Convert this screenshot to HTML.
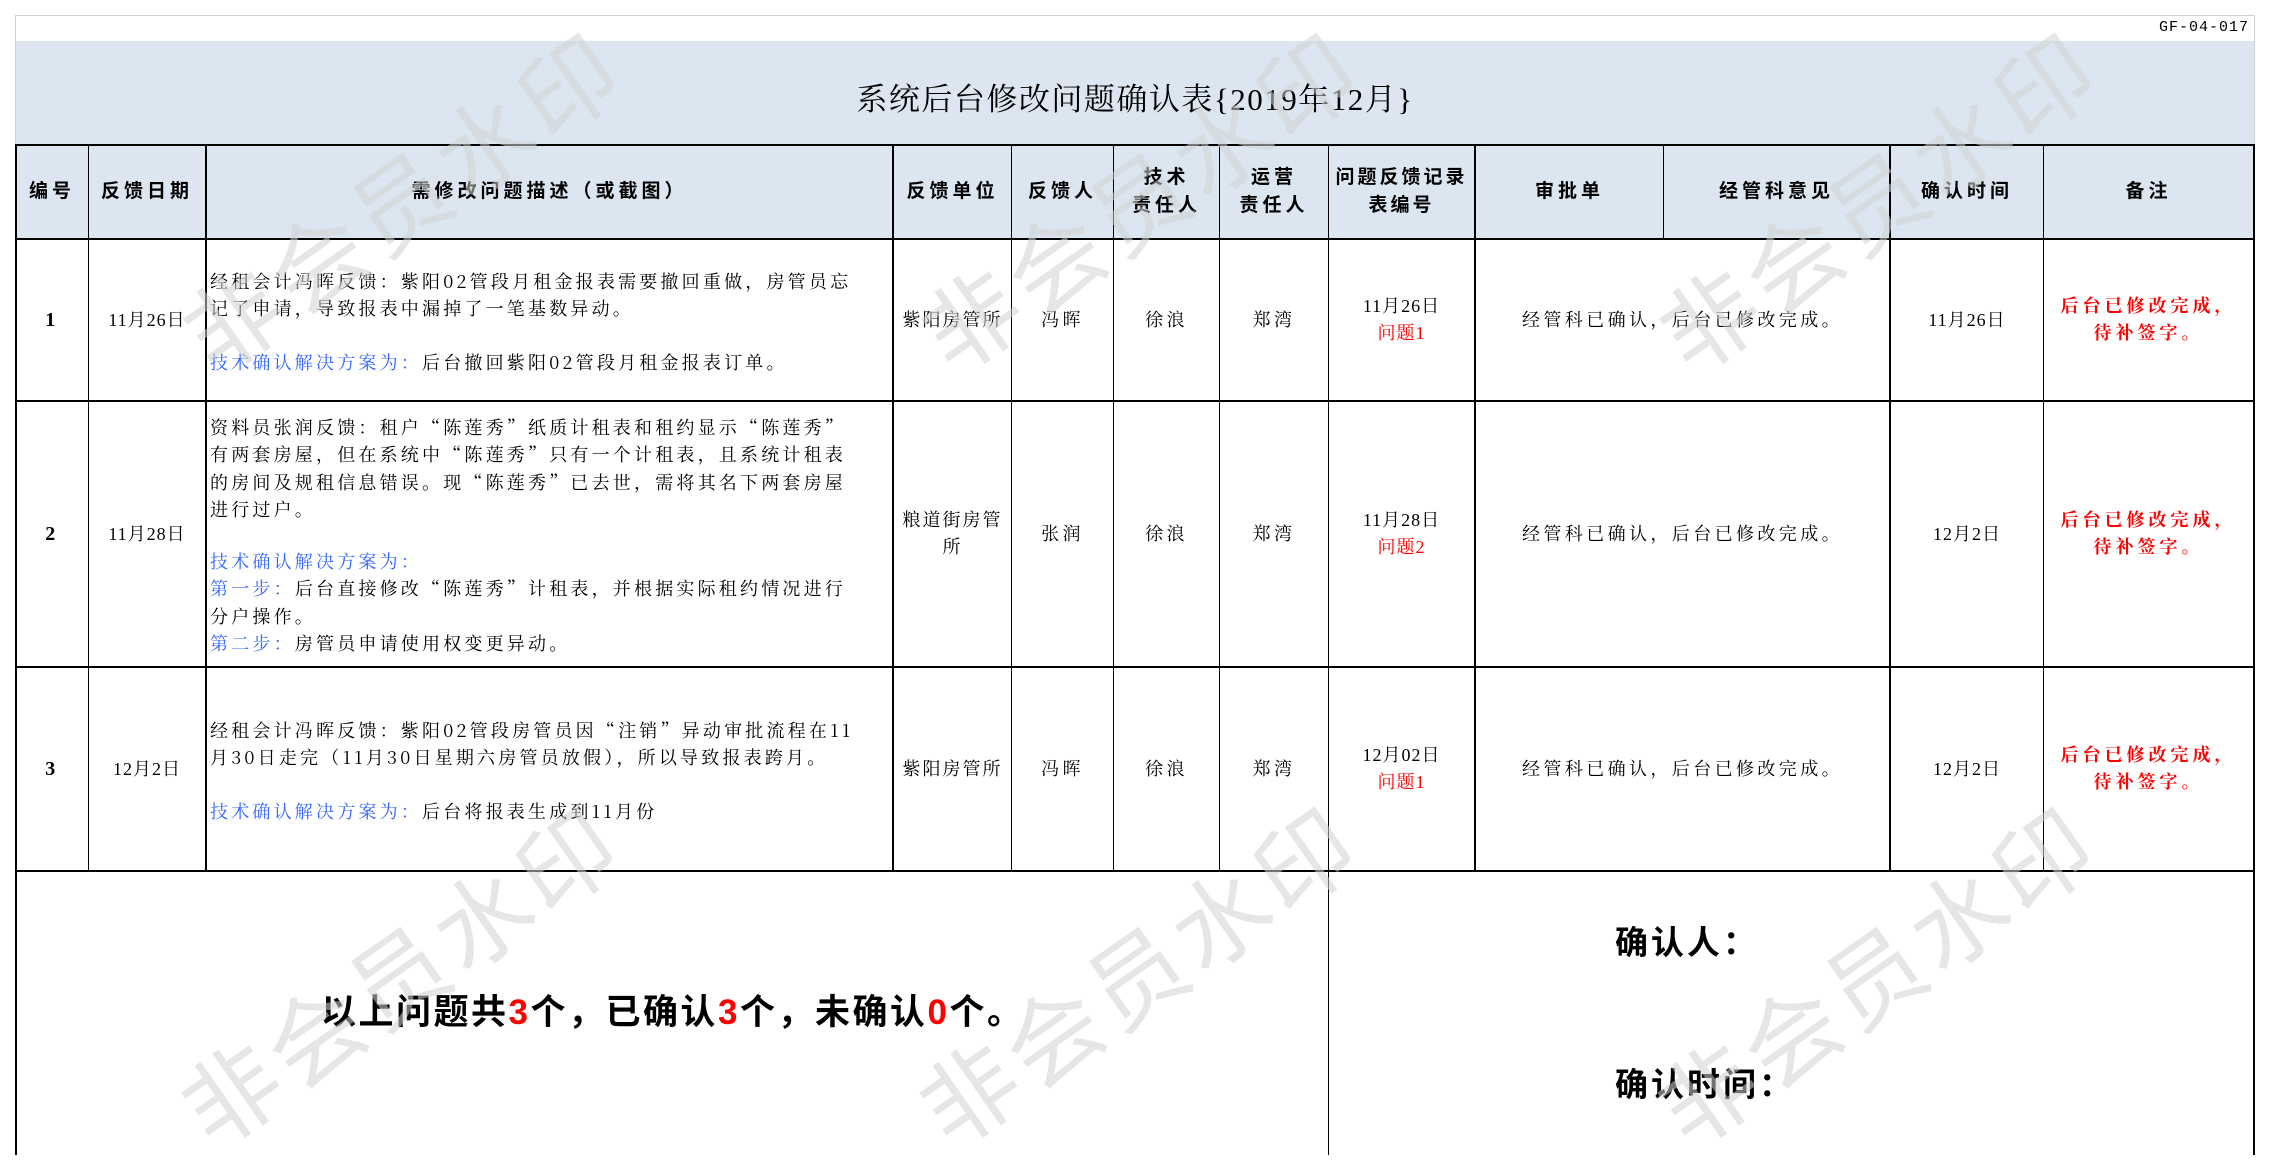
<!DOCTYPE html>
<html><head><meta charset="utf-8">
<style>
*{margin:0;padding:0;box-sizing:border-box}
body{width:2270px;height:1155px;background:#fff;position:relative;overflow:hidden;font-family:"Liberation Serif","Noto Serif CJK SC",serif;color:#000}
.a{position:absolute}
.h{position:absolute;background:#000}
.c{position:absolute;display:flex;align-items:center;justify-content:center;text-align:center;flex-direction:column;line-height:27px}
.hd{font-family:"Liberation Sans","Noto Sans CJK SC",sans-serif;font-weight:bold;font-size:19px;letter-spacing:4px;line-height:28px}
.t{font-size:18px;letter-spacing:3.4px;white-space:nowrap}
.d{font-family:"Noto Serif CJK SC",serif;letter-spacing:3.2px}
.b{color:#3366ff}
.r{color:#ff0000}
.wm{position:absolute;font-family:"Liberation Sans","Noto Sans CJK SC",sans-serif;font-size:96px;color:rgba(210,210,210,0.55);white-space:nowrap;transform:translate(-50%,-50%) rotate(-35deg);letter-spacing:6px;z-index:5;pointer-events:none}
</style></head><body>
<div class="a" style="left:15px;top:15px;width:2240px;height:1140px;border:1px solid #d0d0d0;border-bottom:none"></div>
<div class="a" style="left:16px;top:41px;width:2238px;height:104px;background:#dce6f1"></div>
<div class="a" style="left:16px;top:145px;width:2238px;height:94px;background:#dce6f1"></div>
<div class="a" style="right:21px;top:19px;font-size:15px;letter-spacing:1px;font-family:'Liberation Mono',monospace">GF-04-017</div>
<div class="a" style="left:0;width:2270px;top:74px;text-align:center;font-size:31px;letter-spacing:1.5px">系统后台修改问题确认表{2019年12月}</div>

<div class="h" style="left:15px;top:144px;width:2240px;height:2px"></div>
<div class="h" style="left:15px;top:238px;width:2240px;height:2px"></div>
<div class="h" style="left:15px;top:400px;width:2240px;height:2px"></div>
<div class="h" style="left:15px;top:666px;width:2240px;height:2px"></div>
<div class="h" style="left:15px;top:870px;width:2240px;height:2px"></div>
<div class="h" style="left:15px;top:145px;width:1.5px;height:1010px"></div>
<div class="h" style="left:2253px;top:145px;width:1.5px;height:1010px"></div>
<div class="h" style="left:88px;top:145px;width:1px;height:726px"></div>
<div class="h" style="left:205px;top:145px;width:1.5px;height:726px"></div>
<div class="h" style="left:892px;top:145px;width:1.5px;height:726px"></div>
<div class="h" style="left:1011px;top:145px;width:1px;height:726px"></div>
<div class="h" style="left:1113px;top:145px;width:1px;height:726px"></div>
<div class="h" style="left:1219px;top:145px;width:1px;height:726px"></div>
<div class="h" style="left:1328px;top:145px;width:1px;height:1010px"></div>
<div class="h" style="left:1474px;top:145px;width:1.5px;height:726px"></div>
<div class="h" style="left:1663px;top:145px;width:1px;height:94px"></div>
<div class="h" style="left:1889px;top:145px;width:1.5px;height:726px"></div>
<div class="h" style="left:2043px;top:145px;width:1px;height:726px"></div>

<div class="c hd" style="left:16px;top:146px;width:72px;height:92px">编号</div>
<div class="c hd" style="left:89px;top:146px;width:116px;height:92px">反馈日期</div>
<div class="c hd" style="left:207px;top:146px;width:685px;height:92px">需修改问题描述（或截图）</div>
<div class="c hd" style="left:894px;top:146px;width:117px;height:92px">反馈单位</div>
<div class="c hd" style="left:1012px;top:146px;width:101px;height:92px">反馈人</div>
<div class="c hd" style="left:1114px;top:146px;width:105px;height:92px">技术<br>责任人</div>
<div class="c hd" style="left:1220px;top:146px;width:108px;height:92px">运营<br>责任人</div>
<div class="c hd" style="left:1329px;top:146px;width:145px;height:92px;letter-spacing:3px">问题反馈记录<br>表编号</div>
<div class="c hd" style="left:1476px;top:146px;width:187px;height:92px">审批单</div>
<div class="c hd" style="left:1664px;top:146px;width:225px;height:92px">经管科意见</div>
<div class="c hd" style="left:1891px;top:146px;width:152px;height:92px">确认时间</div>
<div class="c hd" style="left:2044px;top:146px;width:209px;height:92px">备注</div>

<!-- row 1 -->
<div class="c t" style="left:16px;top:240px;width:72px;height:160px;font-size:20px;font-weight:bold">1</div>
<div class="c t" style="left:89px;top:240px;width:116px;height:160px;letter-spacing:1px">11月26日</div>
<div class="a t d" style="left:210px;top:268px;line-height:27px">经租会计冯晖反馈：紫阳02管段月租金报表需要撤回重做，房管员忘<br>记了申请，导致报表中漏掉了一笔基数异动。<br><div style="height:27px"></div><span class="b">技术确认解决方案为：</span>后台撤回紫阳02管段月租金报表订单。</div>
<div class="c t" style="left:894px;top:240px;width:117px;height:160px;letter-spacing:2px">紫阳房管所</div>
<div class="c t" style="left:1012px;top:240px;width:101px;height:160px">冯晖</div>
<div class="c t" style="left:1114px;top:240px;width:105px;height:160px">徐浪</div>
<div class="c t" style="left:1220px;top:240px;width:108px;height:160px">郑湾</div>
<div class="c t" style="left:1329px;top:240px;width:145px;height:160px;letter-spacing:1px">11月26日<br><span class="r">问题1</span></div>
<div class="c t" style="left:1476px;top:240px;width:413px;height:160px">经管科已确认，后台已修改完成。</div>
<div class="c t" style="left:1891px;top:240px;width:152px;height:160px;letter-spacing:1px">11月26日</div>
<div class="c t r" style="left:2044px;top:240px;width:209px;height:160px;font-weight:bold;letter-spacing:4px">后台已修改完成，<br>待补签字。</div>

<!-- row 2 -->
<div class="c t" style="left:16px;top:402px;width:72px;height:264px;font-size:20px;font-weight:bold">2</div>
<div class="c t" style="left:89px;top:402px;width:116px;height:264px;letter-spacing:1px">11月28日</div>
<div class="a t d" style="left:210px;top:414px;line-height:27.3px">资料员张润反馈：租户“陈莲秀”纸质计租表和租约显示“陈莲秀”<br>有两套房屋，但在系统中“陈莲秀”只有一个计租表，且系统计租表<br>的房间及规租信息错误。现“陈莲秀”已去世，需将其名下两套房屋<br>进行过户。<br><div style="height:25px"></div><span class="b">技术确认解决方案为：</span><br><span class="b">第一步：</span>后台直接修改“陈莲秀”计租表，并根据实际租约情况进行<br>分户操作。<br><span class="b">第二步：</span>房管员申请使用权变更异动。</div>
<div class="c t" style="left:894px;top:402px;width:117px;height:264px;letter-spacing:2px">粮道街房管<br>所</div>
<div class="c t" style="left:1012px;top:402px;width:101px;height:264px">张润</div>
<div class="c t" style="left:1114px;top:402px;width:105px;height:264px">徐浪</div>
<div class="c t" style="left:1220px;top:402px;width:108px;height:264px">郑湾</div>
<div class="c t" style="left:1329px;top:402px;width:145px;height:264px;letter-spacing:1px">11月28日<br><span class="r">问题2</span></div>
<div class="c t" style="left:1476px;top:402px;width:413px;height:264px">经管科已确认，后台已修改完成。</div>
<div class="c t" style="left:1891px;top:402px;width:152px;height:264px;letter-spacing:1px">12月2日</div>
<div class="c t r" style="left:2044px;top:402px;width:209px;height:264px;font-weight:bold;letter-spacing:4px">后台已修改完成，<br>待补签字。</div>

<!-- row 3 -->
<div class="c t" style="left:16px;top:668px;width:72px;height:202px;font-size:20px;font-weight:bold">3</div>
<div class="c t" style="left:89px;top:668px;width:116px;height:202px;letter-spacing:1px">12月2日</div>
<div class="a t d" style="left:210px;top:717px;line-height:27px">经租会计冯晖反馈：紫阳02管段房管员因“注销”异动审批流程在11<br>月30日走完（11月30日星期六房管员放假），所以导致报表跨月。<br><div style="height:27px"></div><span class="b">技术确认解决方案为：</span>后台将报表生成到11月份</div>
<div class="c t" style="left:894px;top:668px;width:117px;height:202px;letter-spacing:2px">紫阳房管所</div>
<div class="c t" style="left:1012px;top:668px;width:101px;height:202px">冯晖</div>
<div class="c t" style="left:1114px;top:668px;width:105px;height:202px">徐浪</div>
<div class="c t" style="left:1220px;top:668px;width:108px;height:202px">郑湾</div>
<div class="c t" style="left:1329px;top:668px;width:145px;height:202px;letter-spacing:1px">12月02日<br><span class="r">问题1</span></div>
<div class="c t" style="left:1476px;top:668px;width:413px;height:202px">经管科已确认，后台已修改完成。</div>
<div class="c t" style="left:1891px;top:668px;width:152px;height:202px;letter-spacing:1px">12月2日</div>
<div class="c t r" style="left:2044px;top:668px;width:209px;height:202px;font-weight:bold;letter-spacing:4px">后台已修改完成，<br>待补签字。</div>

<div class="a" style="left:321px;top:984px;font-family:'Liberation Sans','Noto Sans CJK SC',sans-serif;font-weight:bold;font-size:35px;letter-spacing:2.5px;white-space:nowrap">以上问题共<span class="r">3</span>个，已确认<span class="r">3</span>个，未确认<span class="r">0</span>个。</div>
<div class="a" style="left:1615px;top:916px;font-family:'Liberation Sans','Noto Sans CJK SC',sans-serif;font-weight:bold;font-size:33px;letter-spacing:3px">确认人：</div>
<div class="a" style="left:1615px;top:1058px;font-family:'Liberation Sans','Noto Sans CJK SC',sans-serif;font-weight:bold;font-size:33px;letter-spacing:3px">确认时间：</div>

<div class="wm" style="left:400px;top:197px">非会员水印</div>
<div class="wm" style="left:1138px;top:197px">非会员水印</div>
<div class="wm" style="left:1876px;top:197px">非会员水印</div>
<div class="wm" style="left:398px;top:971px">非会员水印</div>
<div class="wm" style="left:1136px;top:971px">非会员水印</div>
<div class="wm" style="left:1874px;top:971px">非会员水印</div>
</body></html>
